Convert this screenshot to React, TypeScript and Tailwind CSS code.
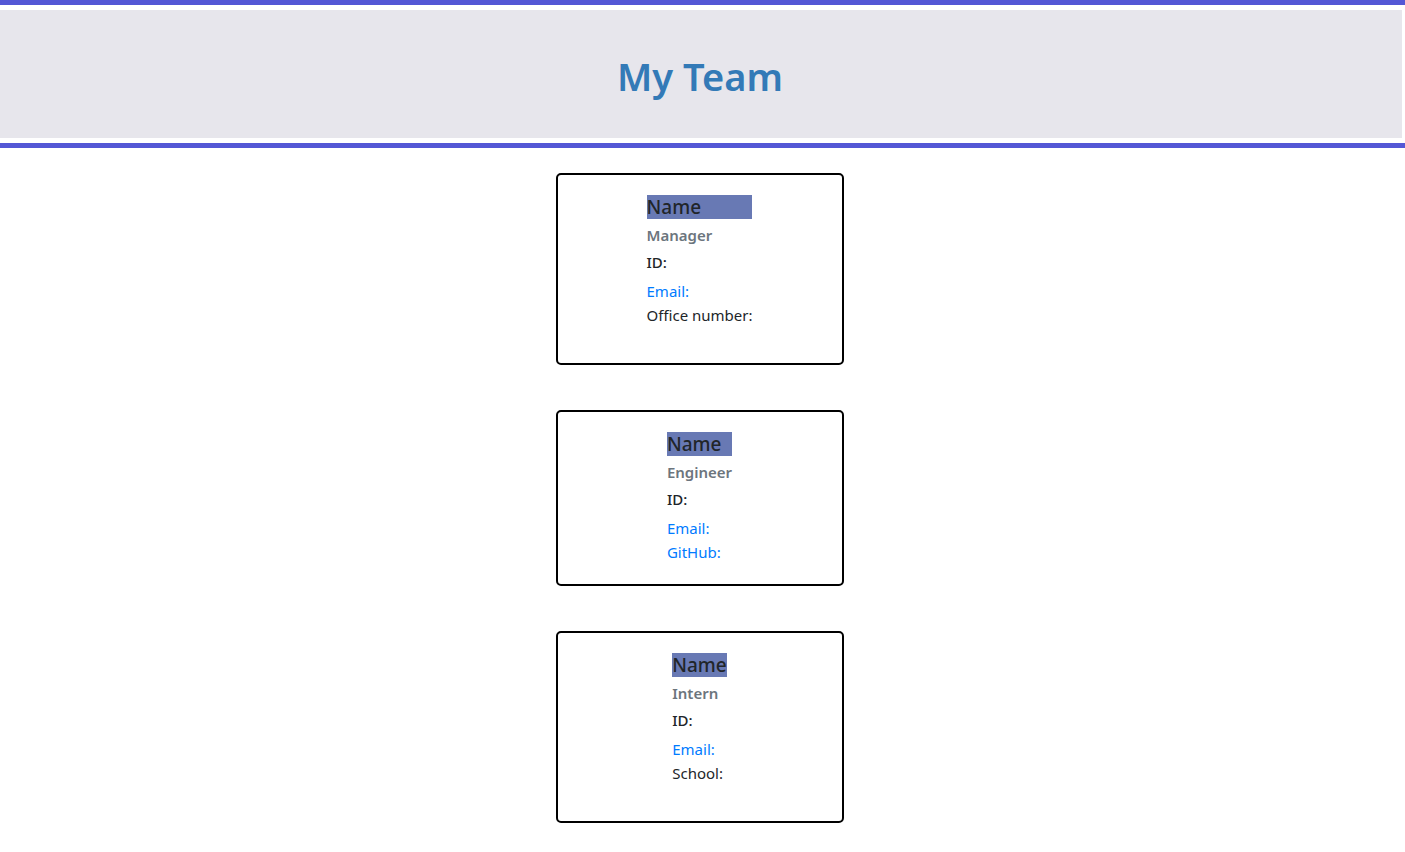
import React from 'react';

interface Member {
  role: string;
  extra: { label: string; link: boolean };
}

const members: Member[] = [
  { role: 'Manager', extra: { label: 'Office number:', link: false } },
  { role: 'Engineer', extra: { label: 'GitHub:', link: true } },
  { role: 'Intern', extra: { label: 'School:', link: false } },
];

const Card: React.FC<{ member: Member }> = ({ member }) => {
  return (
    <div className="w-[288px] border-2 border-black rounded-[5px] pt-5 pb-5 flex justify-center">
      <div className="w-fit">
        <div className="h-6 bg-[#6879b4] text-[19px] leading-6 font-medium text-[#212529]">Name</div>
        <div className="mt-[7px] text-[15px] leading-[19px] font-semibold text-[#6c757d]">{member.role}</div>
        <div className="mt-[5px] text-[15px] leading-6 font-medium text-[#212529]">ID:</div>
        <div className="mt-[5px] text-[15px] leading-6 text-[#007bff]">Email:</div>
        <div
          className={
            member.extra.link
              ? 'text-[15px] leading-6 text-[#007bff]'
              : 'text-[15px] leading-6 text-[#212529] mb-4'
          }
        >
          {member.extra.label}
        </div>
      </div>
    </div>
  );
};

export default function App() {
  return (
    <div className="min-h-screen bg-white font-['Noto_Sans',sans-serif]">
      <div className="border-t-[5px] border-b-[5px] border-[#5457d5] py-[5px]">
        <div className="h-[128px] mr-[3px] bg-[#e7e6ec] flex items-center justify-center">
          <h1 className="text-[38px] leading-[48px] font-semibold text-[#337ab7] pt-1 pr-[2px]">My Team</h1>
        </div>
      </div>
      <div className="flex flex-col items-center gap-[45px] pt-[25px] pr-[6px] pb-8">
        {members.map((m) => (
          <Card key={m.role} member={m} />
        ))}
      </div>
    </div>
  );
}
